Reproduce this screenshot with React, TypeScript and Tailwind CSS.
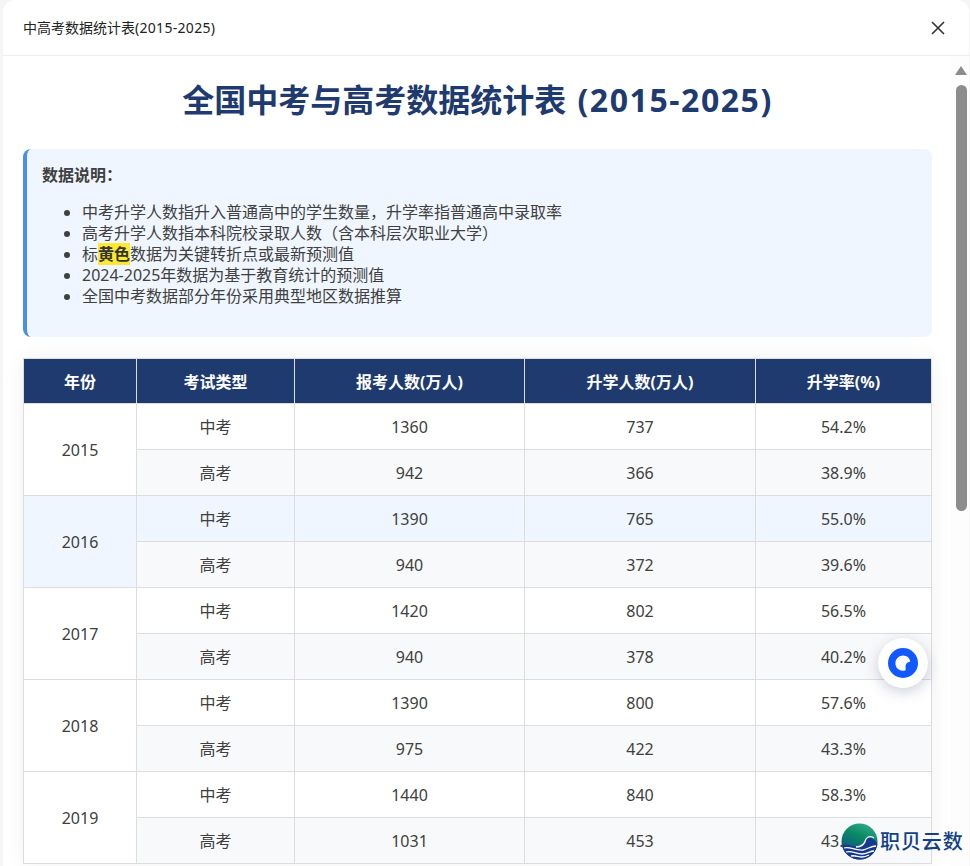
const font = { fontFamily: '"Noto Sans", "Noto Sans CJK SC", sans-serif' };
const years = [
  { year: "2015", a: ["1360", "737", "54.2%"], b: ["942", "366", "38.9%"] },
  { year: "2016", hot: true, a: ["1390", "765", "55.0%"], b: ["940", "372", "39.6%"] },
  { year: "2017", a: ["1420", "802", "56.5%"], b: ["940", "378", "40.2%"] },
  { year: "2018", a: ["1390", "800", "57.6%"], b: ["975", "422", "43.3%"] },
  { year: "2019", a: ["1440", "840", "58.3%"], b: ["1031", "453", "43.9%"] },
];
const notes = ["中考升学人数指升入普通高中的学生数量，升学率指普通高中录取率", "高考升学人数指本科院校录取人数（含本科层次职业大学）"];
const cell = "border border-[#dddddd] text-center text-[16px] text-[#404040] p-0";

export default function App() {
  return (
    <div className="h-[866px] w-[970px] overflow-hidden bg-[#f5f5f5] pl-[3px]" style={font}>
      <div className="relative h-full w-[966px] overflow-hidden rounded-t-xl bg-white">
        <div className="flex h-[56px] items-center justify-between border-b border-[#eeeeee] pl-[20px] pr-[24px]">
          <span className="text-[14px] text-[#222222]">中高考数据统计表<span className="tracking-[0.3px]">(2015-2025)</span></span>
          <svg width="14" height="14" viewBox="0 0 14 14" className="stroke-[#333333]"><path d="M1 1 13 13M13 1 1 13" strokeWidth="1.6" /></svg>
        </div>
        <div className="flex h-[810px] overflow-hidden">
          <div className="w-[948px] pl-[20px] pr-[19px]">
            <h1 className="mt-[20px] text-center text-[32px] font-bold leading-[48px] text-[#1e3a6f]">全国中考与高考数据统计表 <span className="ml-[3px] tracking-[1.55px]">(2015-2025)</span></h1>
            <div className="mt-[25px] h-[188px] rounded-lg border-l-4 border-[#4a90e2] bg-[#eff6ff] pl-[15px] pt-[14px] text-[16px] text-[#404040]">
              <p className="font-bold leading-[24px]">数据说明：</p>
              <ul className="mt-[15px] list-disc pl-[40px] leading-[21px]">
                {notes.map((n) => <li key={n}>{n}</li>)}
                <li>标<span className="bg-[#fde92f] font-bold text-[#333333]">黄色</span>数据为关键转折点或最新预测值</li>
                <li>2024-2025年数据为基于教育统计的预测值</li>
                <li>全国中考数据部分年份采用典型地区数据推算</li>
              </ul>
            </div>
            <table className="mt-[21px] w-[909px] table-fixed border-collapse shadow-[0_0_20px_rgba(0,0,0,0.06)]">
              <colgroup>
                <col className="w-[113px]" /><col className="w-[158px]" /><col className="w-[230px]" /><col className="w-[231px]" /><col />
              </colgroup>
              <thead>
                <tr className="h-[45px] bg-[#1e3a6f] text-[16px] font-bold text-white">
                  {["年份", "考试类型", "报考人数(万人)", "升学人数(万人)", "升学率(%)"].map((h) => (
                    <th key={h} className="border border-[#dddddd] p-0 pt-px">{h}</th>
                  ))}
                </tr>
              </thead>
              <tbody>
                {years.map((y) => (
                  <Rows key={y.year} {...y} />
                ))}
              </tbody>
            </table>
          </div>
          <div className="relative w-[18px] bg-[#fdfdfd]">
            <div className="ml-[4px] mt-[10px] h-0 w-0 border-x-[6px] border-b-[9px] border-x-transparent border-b-[#8c8c8c]" />
            <div className="ml-[5px] mt-[10px] h-[426px] w-[11px] rounded-full bg-[#8c8c8c]" />
          </div>
        </div>
        <div className="absolute left-[875px] top-[638px] flex h-[50px] w-[50px] items-center justify-center rounded-full bg-white shadow-[0_4px_14px_rgba(60,70,110,0.25)]">
          <svg width="30" height="30" viewBox="0 0 30 30">
            <circle cx="15" cy="15" r="15" fill="#1159ff" />
            <path d="M15 7.500A7.600 7.600 0 0 1 22.300 13.500C20 13.700 18 15.200 17.600 17.600 17.300 19.400 18 20.800 17.600 22.200A7.600 7.600 0 1 1 15 7.500Z" fill="#ffffff" />
          </svg>
        </div>
        <div className="absolute left-[838px] top-[823px] flex items-center">
          <svg width="37" height="37" viewBox="0 0 37 37">
            <defs>
              <linearGradient id="globe" x1="0.7" y1="0" x2="0.3" y2="1">
                <stop offset="0" stopColor="#2fa98c" />
                <stop offset="0.35" stopColor="#0b8a63" />
                <stop offset="0.65" stopColor="#0c6b78" />
                <stop offset="1" stopColor="#12307f" />
              </linearGradient>
            </defs>
            <circle cx="18.500" cy="18.500" r="18" fill="url(#globe)" />
            <path d="M1 22C8 20 14 26 21 23 24 21 24 17 27 15 31 14 35 18 36.500 21A18 18 0 0 1 1 22Z" fill="#16398f" />
            <path d="M15 24C21 24 24 20 25 16 27 13 31 13 33 15M3 25C9 23 14 28 22 27 27 26 30 23 35 23M5 29C10 27 15 31 21 31 26 31 29 28 33 28M10 33C14 32 17 34 21 34 24 34 26 33 28 32" fill="none" stroke="#ffffff" strokeWidth="1.300" />
          </svg>
          <span className="ml-[2px] text-[20px] font-medium leading-none tracking-[0.9px] text-[#123f86]">职贝云数</span>
        </div>
      </div>
    </div>
  );
}

function Rows({ year, hot, a, b }: { year: string; hot?: boolean; a: string[]; b: string[] }) {
  return (
    <>
      <tr className={hot ? "h-[46px] bg-[#eff6ff]" : "h-[46px] bg-white"}>
        <td rowSpan={2} className={`${cell} ${hot ? "bg-[#eff6ff]" : "bg-white"}`}>{year}</td>
        <td className={cell}>中考</td>
        {a.map((v, i) => <td key={i} className={cell}>{v}</td>)}
      </tr>
      <tr className="h-[46px] bg-[#f8f9fa]">
        <td className={cell}>高考</td>
        {b.map((v, i) => <td key={i} className={cell}>{v}</td>)}
      </tr>
    </>
  );
}
